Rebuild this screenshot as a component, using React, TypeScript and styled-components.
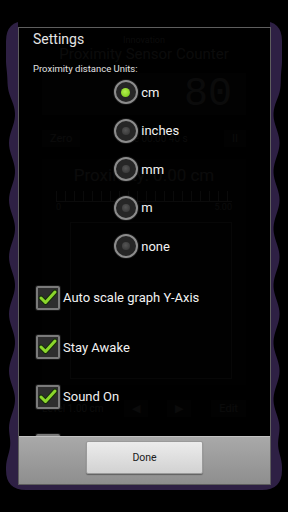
// React
import React, { useMemo } from 'react'

// Components
import styled, { createGlobalStyle } from 'styled-components'


const UNITS = ['cm', 'inches', 'mm', 'm', 'none']

const OPTIONS = [
    { label: 'Auto scale graph Y-Axis', checked: true },
    { label: 'Stay Awake', checked: true },
    { label: 'Sound On', checked: true },
    { label: 'Vibrate', checked: false },
]

const FRAME_W = 276
const FRAME_H = 469

// wavy purple outline behind the app
const buildFramePath = () => {
    const r = 20
    const ease = (y: number) => {
        const a = Math.min(1, Math.max(0, (y - 40) / 45))
        const b = Math.min(1, Math.max(0, (FRAME_H - 22 - y) / 40))
        const t = Math.min(a, b)
        return t * t * (3 - 2 * t)
    }
    const inset = (y: number, side: 'l' | 'r') => {
        const wave = side === 'l'
            ? 6 - 3 * Math.cos((2 * Math.PI * (y - 65)) / 57)
            : 5.5 - 3 * Math.cos((2 * Math.PI * (y - 65)) / 57)
        return wave * ease(y)
    }
    let d = `M${r},0 H${FRAME_W - r} Q${FRAME_W},0 ${FRAME_W},${r}`
    for (let y = r; y <= FRAME_H - r; y += 3) d += ` L${(FRAME_W - inset(y, 'r')).toFixed(2)},${y}`
    d += ` L${FRAME_W},${FRAME_H - r} Q${FRAME_W},${FRAME_H} ${FRAME_W - r},${FRAME_H} H${r} Q0,${FRAME_H} 0,${FRAME_H - r}`
    for (let y = FRAME_H - r; y >= r; y -= 3) d += ` L${inset(y, 'l').toFixed(2)},${y}`
    d += ` L0,${r} Q0,0 ${r},0 Z`
    return d
}

const Check = () => (
    <svg width="24" height="24" viewBox="0 0 24 24">
        <path d="M5 12 L9.5 16.5 L19 6" fill="none" stroke="#16300a" strokeWidth="5" strokeLinecap="round" strokeLinejoin="round" />
        <path d="M5 12 L9.5 16.5 L19 6" fill="none" stroke="#8bd62c" strokeWidth="3" strokeLinecap="round" strokeLinejoin="round" />
    </svg>
)

export default function App() {
    const framePath = useMemo(buildFramePath, [])

    return (
        <Screen>
            <GlobalStyle />

            <Frame>
                <FrameShape width={FRAME_W} height={FRAME_H} viewBox={`0 0 ${FRAME_W} ${FRAME_H}`}>
                    <path d={framePath} fill="#2e2044" />
                </FrameShape>

                <AppPanel>
                    <Header>
                        <Brand>Innovation</Brand>
                        <AppTitle>Proximity Sensor Counter</AppTitle>
                    </Header>
                    <Display>80</Display>
                    <Controls>
                        <AppButton>Zero</AppButton>
                        <span>Time 00:00 40 s</span>
                        <AppButton>II</AppButton>
                    </Controls>
                    <ChartCard>
                        <Reading>Proximity: 0.00 cm</Reading>
                        <Ruler />
                        <Scale><span>0</span><span>5.00</span></Scale>
                        <Chart />
                    </ChartCard>
                    <Controls>
                        <span>Level 1.00 cm</span>
                        <AppButton>◀</AppButton>
                        <AppButton>▶</AppButton>
                        <AppButton>Edit</AppButton>
                    </Controls>
                </AppPanel>
            </Frame>

            <Dialog>
                <Body>
                    <Title>Settings</Title>
                    <Label>Proximity distance Units:</Label>

                    <RadioGroup>
                        {UNITS.map((unit, i) => (
                            <RadioRow key={unit}>
                                <Radio>
                                    <Dot $on={i === 0} />
                                </Radio>
                                <RadioText>{unit}</RadioText>
                            </RadioRow>
                        ))}
                    </RadioGroup>

                    <Options>
                        {OPTIONS.map(option => (
                            <OptionRow key={option.label}>
                                <Box>{option.checked && <Check />}</Box>
                                <OptionText>{option.label}</OptionText>
                            </OptionRow>
                        ))}
                    </Options>
                </Body>

                <Footer>
                    <DoneButton>Done</DoneButton>
                </Footer>
            </Dialog>
        </Screen>
    )
}

const GlobalStyle = createGlobalStyle`
    html, body {
        background: #000;
        margin: 0;
        padding: 0;
    }
    body {
        font-family: Roboto, 'Noto Sans', sans-serif;
    }
`

const Screen = styled.div`
    position: relative;
    background: #000;
    overflow: hidden;
    height: 512px;
    width: 288px;
`

const Frame = styled.div`
    position: relative;
    margin: 21px 6px 0;
    height: ${FRAME_H}px;
`

const FrameShape = styled.svg`
    position: absolute;
    left: 0;
    top: 0;
`

const AppPanel = styled.div`
    position: relative;
    flex-direction: column;
    background: #000;
    margin: 6px 12px 0;
    padding: 0 24px;
    height: 458px;
    display: flex;
    color: #8a8a8a;
`

const Header = styled.div`
    flex-direction: column;
    align-items: center;
    padding-top: 14px;
    display: flex;
`

const Brand = styled.div`
    font-size: 9px;
    line-height: 11px;
`

const AppTitle = styled.div`
    font-size: 15px;
    line-height: 17px;
`

const Display = styled.div`
    justify-content: flex-end;
    align-items: center;
    background: #1c1c1c;
    font-family: 'Liberation Mono', monospace;
    padding-right: 14px;
    margin-top: 10px;
    font-size: 40px;
    height: 42px;
    display: flex;
    color: #8c8c8c;
`

const Controls = styled.div`
    justify-content: space-between;
    align-items: center;
    margin-top: 14px;
    font-size: 10px;
    height: 18px;
    display: flex;
`

const AppButton = styled.div`
    background: #242424;
    padding: 2px 8px;
    font-size: 11px;
`

const ChartCard = styled.div`
    flex-direction: column;
    background: #141414;
    padding: 6px 14px;
    margin-top: 12px;
    height: 214px;
    display: flex;
`

const Reading = styled.div`
    text-align: center;
    font-size: 17px;
`

const Ruler = styled.div`
    border-bottom: 1px solid #888;
    margin-top: 6px;
    height: 10px;
    background: repeating-linear-gradient(90deg, #888 0 1px, transparent 1px 9px);
`

const Scale = styled.div`
    justify-content: space-between;
    font-size: 9px;
    display: flex;
`

const Chart = styled.div`
    border: 1px solid #5a5a5a;
    margin: 10px 0 0 14px;
    flex: 1;
`

const Dialog = styled.div`
    position: absolute;
    flex-direction: column;
    background: rgba(0, 0, 0, 0.92);
    border: 1px solid #5e5e5e;
    box-sizing: border-box;
    height: 458px;
    width: 253px;
    left: 18px;
    top: 27px;
    display: flex;
`

const Body = styled.div`
    flex-direction: column;
    overflow: hidden;
    display: flex;
    flex: 1;
`

const Title = styled.div`
    padding: 1px 0 0 14px;
    line-height: 20px;
    font-size: 14px;
    color: #e4e4e4;
`

const Label = styled.div`
    margin: 13.75px 0 0 14px;
    line-height: 12px;
    font-size: 9.5px;
    color: #e0e0e0;
`

const RadioGroup = styled.div`
    flex-direction: column;
    align-self: center;
    margin: -2px 0 0 4px;
    display: flex;
`

const RadioRow = styled.div`
    align-items: center;
    height: 38.5px;
    display: flex;
`

const Radio = styled.div`
    justify-content: center;
    align-items: center;
    box-sizing: border-box;
    border: 2px solid #8c8c8c;
    border-radius: 50%;
    background: #262626;
    box-shadow: 0 0 0 1px #141414;
    height: 24px;
    width: 24px;
    display: flex;
`

const Dot = styled.div<{ $on: boolean }>`
    border-radius: 50%;
    height: ${p => p.$on ? 9 : 8}px;
    width: ${p => p.$on ? 9 : 8}px;
    background: ${p => p.$on
        ? 'radial-gradient(circle at 45% 40%, #b4f04c, #86cf24 70%)'
        : 'radial-gradient(circle at 45% 40%, #555, #3c3c3c 70%)'};
`

const RadioText = styled.div`
    margin-left: 3.5px;
    font-size: 13px;
    color: #f2f2f2;
`

const Options = styled.div`
    flex-direction: column;
    margin-top: 7.5px;
    display: flex;
`

const OptionRow = styled.div`
    align-items: center;
    padding-left: 17px;
    height: 49.5px;
    display: flex;
`

const Box = styled.div`
    box-sizing: border-box;
    border: 2px solid #7a7a7a;
    border-radius: 2px;
    background: #2e2e2e;
    box-shadow: 0 0 0 1px #161616;
    height: 24px;
    width: 24px;
    flex-shrink: 0;

    svg {
        display: block;
        margin: -2px;
    }
`

const OptionText = styled.div`
    margin-left: 3px;
    font-size: 13px;
    color: #f2f2f2;
`

const Footer = styled.div`
    justify-content: center;
    background: linear-gradient(#a9a9a9, #8e8e8e);
    border-top: 1px solid #c2c2c2;
    padding-top: 4px;
    height: 43px;
    display: flex;
`

const DoneButton = styled.div`
    justify-content: center;
    align-items: center;
    box-sizing: border-box;
    background: linear-gradient(#ececec, #d2d2d2);
    border: 1px solid #9a9a9a;
    border-radius: 2px;
    box-shadow: 0 1px 1px rgba(0, 0, 0, 0.35);
    font-size: 10.5px;
    color: #202020;
    height: 33px;
    width: 117px;
    display: flex;
`
